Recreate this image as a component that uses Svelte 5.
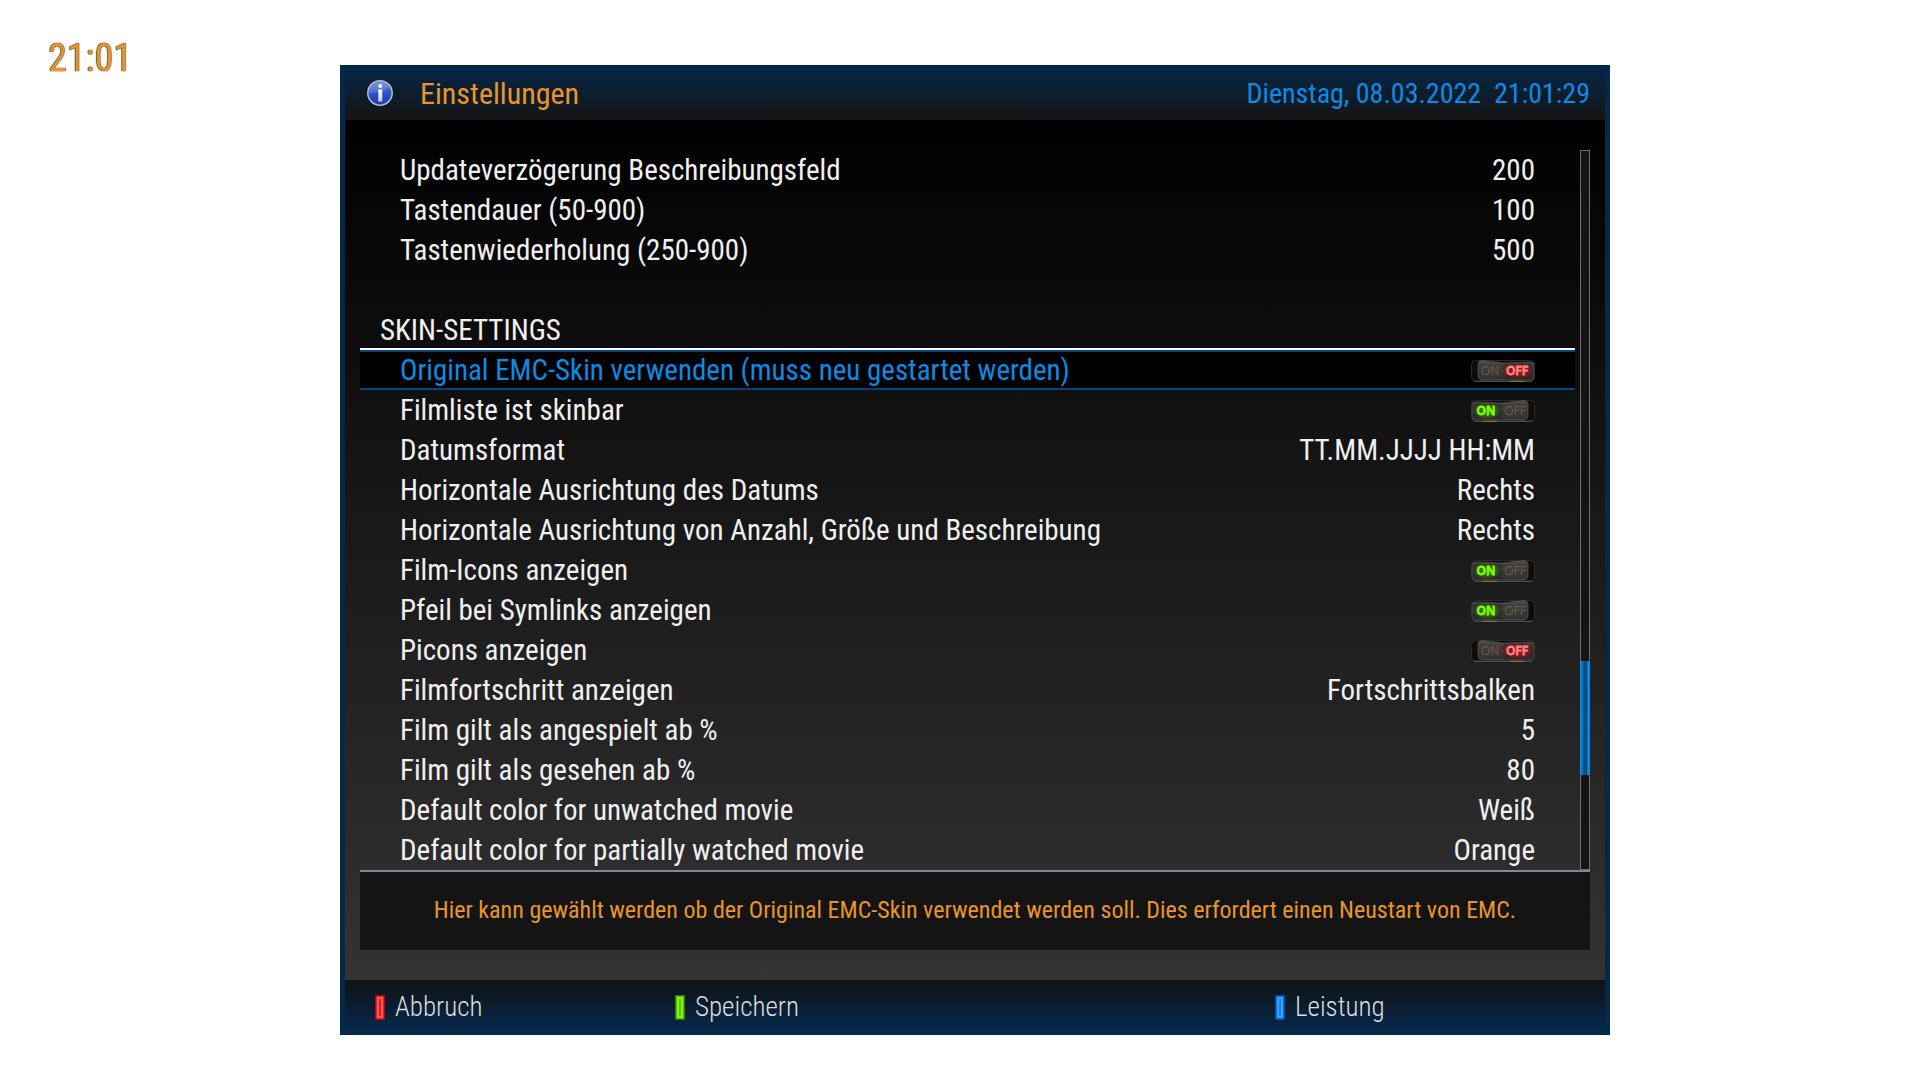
<script>
  let rows = $state([
    { type: 'number', label: 'Updateverzögerung Beschreibungsfeld', value: '200' },
    { type: 'number', label: 'Tastendauer (50-900)', value: '100' },
    { type: 'number', label: 'Tastenwiederholung (250-900)', value: '500' },
    { type: 'gap' },
    { type: 'head', label: 'SKIN-SETTINGS' },
    { type: 'toggle', label: 'Original EMC-Skin verwenden (muss neu gestartet werden)', value: false, selected: true },
    { type: 'toggle', label: 'Filmliste ist skinbar', value: true },
    { type: 'choice', label: 'Datumsformat', value: 'TT.MM.JJJJ HH:MM' },
    { type: 'choice', label: 'Horizontale Ausrichtung des Datums', value: 'Rechts' },
    { type: 'choice', label: 'Horizontale Ausrichtung von Anzahl, Größe und Beschreibung', value: 'Rechts' },
    { type: 'toggle', label: 'Film-Icons anzeigen', value: true },
    { type: 'toggle', label: 'Pfeil bei Symlinks anzeigen', value: true },
    { type: 'toggle', label: 'Picons anzeigen', value: false },
    { type: 'choice', label: 'Filmfortschritt anzeigen', value: 'Fortschrittsbalken' },
    { type: 'number', label: 'Film gilt als angespielt ab %', value: '5' },
    { type: 'number', label: 'Film gilt als gesehen ab %', value: '80' },
    { type: 'choice', label: 'Default color for unwatched movie', value: 'Weiß' },
    { type: 'choice', label: 'Default color for partially watched movie', value: 'Orange' }
  ]);

  const keys = [
    { color: 'red', label: 'Abbruch' },
    { color: 'green', label: 'Speichern' },
    { color: 'yellow', label: '' },
    { color: 'blue', label: 'Leistung' }
  ];
</script>

<div class="screen">
  <time class="clock">21:01</time>

  <main class="window">
    <header class="bar top">
      <svg class="info" viewBox="0 0 26 26" aria-hidden="true">
        <defs>
          <linearGradient id="ball" x1="0" y1="0" x2="0" y2="1">
            <stop offset="0" stop-color="#5b82dc" />
            <stop offset="0.55" stop-color="#2a4fc4" />
            <stop offset="1" stop-color="#1d35b0" />
          </linearGradient>
          <linearGradient id="stem" x1="0" y1="0" x2="0" y2="1">
            <stop offset="0" stop-color="#fff" />
            <stop offset="1" stop-color="#c9cbd6" />
          </linearGradient>
        </defs>
        <circle cx="13" cy="13" r="12.2" fill="url(#ball)" stroke="#b9bcc6" stroke-width="1.5" />
        <path d="M2 14 A11 11 0 0 1 22 6.500 C19 11 10 12 2 14Z" fill="#fff" opacity="0.16" />
        <circle cx="13.300" cy="6" r="2" fill="#fff" />
        <path d="M11.300 9.500h4v12h-4z" fill="url(#stem)" />
      </svg>
      <h1>Einstellungen</h1>
      <time class="date">Dienstag, 08.03.2022&nbsp; 21:01:29</time>
    </header>

    <div class="content">
      <div class="listing">
        <div class="rows">
          {#each rows as row, i}
            {#if row.type === 'gap'}
              <div class="row"></div>
            {:else if row.type === 'head'}
              <h2 class="row head">{row.label}</h2>
            {:else}
              <div class="row item" class:selected={row.selected}>
                <label for="opt-{i}">{row.label}</label>
                {#if row.type === 'toggle'}
                  <span class="toggle">
                    <input id="opt-{i}" type="checkbox" bind:checked={row.value} />
                    <svg viewBox="0 0 64 22" aria-hidden="true">
                      <defs>
                        <linearGradient id="face-{i}" x1="0" y1="0" x2="0" y2="1">
                          <stop offset="0" stop-color="#484848" />
                          <stop offset="0.25" stop-color="#343434" />
                          <stop offset="1" stop-color="#282828" />
                        </linearGradient>
                        <filter id="glow-{i}" x="-40%" y="-60%" width="180%" height="220%">
                          <feGaussianBlur stdDeviation="2" />
                        </filter>
                      </defs>
                      <rect x="0.5" y="0.5" width="63" height="20.500" rx="4" fill="#0c0c0c" stroke="#2a2a2a" />
                      <path d="M3 21.300H61" stroke="#55555a" />
                      {#if row.value}
                        <path d="M4 2 L31 3 L53 0.500 Q57 1 57 4 V16 Q57 19 53 20 H4 Q1 20 1 17 V5 Q1 2 4 2Z" fill="url(#face-{i})" stroke="#4c4c4c" stroke-width="0.8" />
                        <path d="M31 3 L53 0.500 Q57 1 57 4 V16 Q57 19 53 20 H31Z" fill="#fff" opacity="0.05" />
                        <ellipse cx="16" cy="11" rx="11" ry="6" fill="#3f9a00" opacity="0.7" filter="url(#glow-{i})" />
                        <text class="lit" x="15" y="15" fill="#7dff0c" stroke="#7dff0c">ON</text>
                        <text class="dim" x="44" y="15">OFF</text>
                        <path d="M12 21.300H26" stroke="#8f8030" />
                      {:else}
                        <path d="M60 2 L32 3 L11 0.500 Q7 1 7 4 V16 Q7 19 11 20 H60 Q63 20 63 17 V5 Q63 2 60 2Z" fill="url(#face-{i})" stroke="#4c4c4c" stroke-width="0.8" />
                        <path d="M32 3 L11 0.500 Q7 1 7 4 V16 Q7 19 11 20 H32Z" fill="#fff" opacity="0.05" />
                        <ellipse cx="46" cy="11" rx="14" ry="6" fill="#b01018" opacity="0.7" filter="url(#glow-{i})" />
                        <text class="dim" x="19" y="15">ON</text>
                        <text class="lit" x="46" y="15" fill="#ff8080" stroke="#ff8080">OFF</text>
                        <path d="M39 21.300H53" stroke="#8f8030" />
                      {/if}
                    </svg>
                  </span>
                {:else if row.type === 'choice'}
                  <select id="opt-{i}" bind:value={row.value}>
                    <option>{row.value}</option>
                  </select>
                {:else}
                  <input id="opt-{i}" class="number" inputmode="numeric" bind:value={row.value} />
                {/if}
              </div>
            {/if}
          {/each}
        </div>
        <div class="track"><div class="thumb"></div></div>
      </div>

      <p class="help">Hier kann gewählt werden ob der Original EMC-Skin verwendet werden soll. Dies erfordert einen Neustart von EMC.</p>
    </div>

    <footer class="bar bottom">
      {#each keys as key}
        {#if key.label}
          <button><i class="key {key.color}"></i>{key.label}</button>
        {:else}
          <span></span>
        {/if}
      {/each}
    </footer>
  </main>
</div>

<style>
  :global(body) { background: #fff; }
  .screen { display: grid; grid-template-columns: 292px minmax(0, 1fr); padding: 40px 310px 45px 48px; font-family: 'Roboto Condensed', Roboto, sans-serif; }
  .clock { font-size: 38px; line-height: 36px; color: #e8952c; text-shadow: 0 0 1px #000, 0 0 1px #000; }

  .window { margin-top: 25px; box-sizing: border-box; border: solid #052748; border-width: 0 5px; background: #000; color: #f0f0f0; }
  .bar { height: 55px; box-sizing: border-box; display: flex; align-items: center; }
  .top { padding: 0 15px 0 22px; background: linear-gradient(#052748, #141414); }
  .bottom { display: grid; grid-template-columns: repeat(4, 1fr); padding: 0 30px; background: linear-gradient(#101112, #052748 85%); }
  .info { width: 26px; height: 26px; }
  h1 { margin: 2px auto 0 27px; font-size: 30px; line-height: 56px; font-weight: 400; color: #e8952c; }
  .date { margin-top: 2px; font-size: 28px; line-height: 56px; color: #0a8ce6; }

  .content { padding: 30px 15px; background: linear-gradient(#000, #333); }
  .listing { display: grid; grid-template-columns: minmax(0, 1fr) 10px; gap: 5px; }
  .row { height: 40px; box-sizing: border-box; margin: 0; font-size: 29px; line-height: 40px; font-weight: 400; }
  .head { padding-left: 20px; border-bottom: 2px solid #fff; }
  .item { display: flex; align-items: center; justify-content: space-between; padding: 0 40px; }
  .selected { background: #000; color: #0a8ce6; border: solid #0a3f80; border-width: 2px 0; line-height: 36px; }
  .item select, .number { appearance: none; font: inherit; color: inherit; background: none; border: 0; padding: 0; margin: 0; text-align: right; text-align-last: right; }
  .number { width: 120px; }

  .toggle { position: relative; width: 64px; height: 22px; margin-top: 2px; }
  .toggle input { position: absolute; inset: 0; width: 100%; height: 100%; margin: 0; opacity: 0; cursor: pointer; }
  .toggle svg { display: block; width: 64px; height: 22px; }
  .toggle text { font-family: 'Open Sans', sans-serif; font-size: 12px; text-anchor: middle; }
  .toggle .lit { font-weight: 600; stroke-width: 0.8; }
  .toggle .dim { fill: #6e5c48; font-weight: 400; }

  .track { box-sizing: border-box; background: #141414; border: 1px solid #707070; }
  .thumb { height: 114px; margin: 510px -1px 0; background: linear-gradient(90deg, #0a8ce6 10%, #0a6fb8 25%, #09507f 40%, #09507f 65%, #0a8ce6 85%); }

  .help { margin: 0; height: 80px; box-sizing: border-box; border-top: 2px solid #85868f; background: #141414; color: #e8952c; font-size: 24px; line-height: 76px; text-align: center; }

  button { display: flex; align-items: center; gap: 10px; padding: 0; border: 0; background: none; font: 300 27px/55px 'Roboto Condensed Light', 'Roboto Condensed', Roboto, sans-serif; color: #ddd; cursor: pointer; }
  .key { box-sizing: border-box; width: 10px; height: 25px; border: 1px solid; }
  .red { border-color: #a80c0c; background: #f51414; box-shadow: inset 0 0 0 1px #e02020, inset 0 0 0 3px #ff5a5a; }
  .green { border-color: #2c7c0a; background: #55cc00; box-shadow: inset 0 0 0 1px #5ab408, inset 0 0 0 3px #8af010; }
  .blue { border-color: #0a48a8; background: #1486e6; box-shadow: inset 0 0 0 1px #1464d2, inset 0 0 0 3px #32a5fa; }
</style>
